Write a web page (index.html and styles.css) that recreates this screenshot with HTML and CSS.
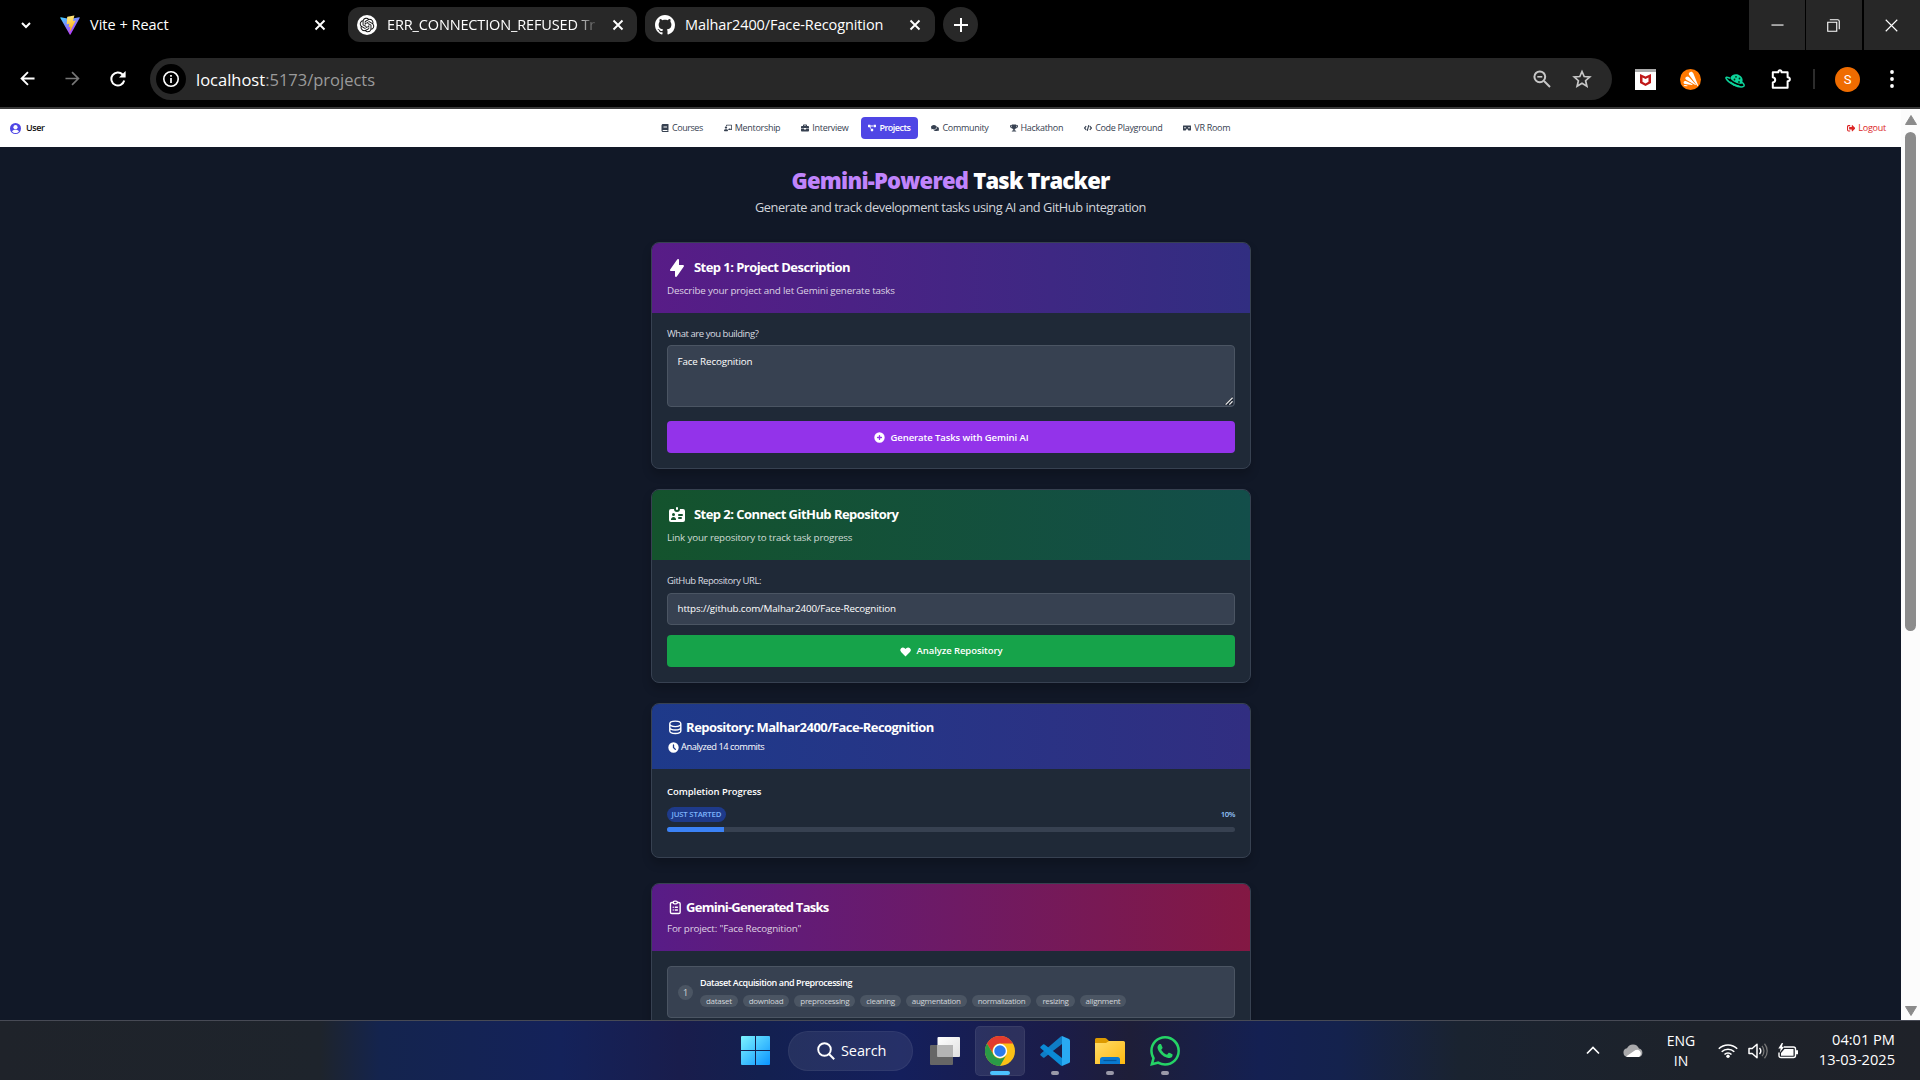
FILE: index.html
```html
<!DOCTYPE html>
<html lang="en">
<head>
<meta charset="utf-8">
<title>Vite + React</title>
<link rel="stylesheet" href="styles.css">
</head>
<body>
<div class="screen">
  <header class="tabstrip">
    <svg class="tab-search" viewBox="0 0 12 12"><path d="M2 4l4 4 4-4" fill="none" stroke="#fff" stroke-width="2"/></svg>
    <div class="tab tab-active">
      <svg class="favicon" viewBox="0 0 32 32">
        <defs>
          <linearGradient id="va" x1="0" y1="0" x2=".6" y2="1"><stop offset="0" stop-color="#41d1ff"/><stop offset="1" stop-color="#bd34fe"/></linearGradient>
          <linearGradient id="vb" x1=".4" y1="0" x2=".6" y2="1"><stop offset="0" stop-color="#ffea83"/><stop offset="1" stop-color="#ffa800"/></linearGradient>
        </defs>
        <path fill="url(#va)" d="M31.5 4.8L16.9 31a.8.8 0 01-1.4 0L.5 4.8a.8.8 0 01.8-1.2L16 6.3l14.7-2.7a.8.8 0 01.8 1.2z"/>
        <path fill="url(#vb)" d="M22.6 .6L11.8 2.7a.4.4 0 00-.3.4l-.7 11.2c0 .3.2.5.5.4l3-.7c.3 0 .5.2.5.5l-.9 4.4c-.1.3.2.5.5.4l1.8-.5c.3-.1.5.2.5.4l-1.4 7c-.1.4.5.6.7.3l8.800-17c.1-.3-.1-.6-.4-.6l-3.100.6c-.3.1-.5-.2-.4-.5l2-7.900c.1-.3-.1-.6-.4-.5z"/>
      </svg>
      <span class="tab-title vite">Vite + React</span>
      <svg class="close" viewBox="0 0 12 12"><path d="M1.500 1.500l9 9M10.500 1.500l-9 9"/></svg>
    </div>
    <div class="tab tab-chat">
      <svg class="favicon" viewBox="0 0 40 40"><circle cx="20" cy="20" r="20" fill="#fff"/><path transform="translate(5.500 5.500) scale(1.210)" fill="#111" d="M22.2819 9.8211a5.9847 5.9847 0 0 0-.5157-4.9108 6.0462 6.0462 0 0 0-6.5098-2.9A6.0651 6.0651 0 0 0 4.9807 4.1818a5.9847 5.9847 0 0 0-3.9977 2.9 6.0462 6.0462 0 0 0 .7427 7.0966 5.98 5.98 0 0 0 .511 4.9107 6.051 6.051 0 0 0 6.5146 2.9001A5.9847 5.9847 0 0 0 13.2599 24a6.0557 6.0557 0 0 0 5.7718-4.2058 5.9894 5.9894 0 0 0 3.9977-2.9001 6.0557 6.0557 0 0 0-.7475-7.0729zm-9.022 12.6081a4.4755 4.4755 0 0 1-2.8764-1.0408l.1419-.0804 4.7783-2.7582a.7948.7948 0 0 0 .3927-.6813v-6.7369l2.02 1.1686a.071.071 0 0 1 .038.052v5.5826a4.504 4.504 0 0 1-4.4945 4.4944zm-9.6607-4.1254a4.4708 4.4708 0 0 1-.5346-3.0137l.142.0852 4.783 2.7582a.7712.7712 0 0 0 .7806 0l5.8428-3.3685v2.3324a.0804.0804 0 0 1-.0332.0615L9.74 19.9502a4.4992 4.4992 0 0 1-6.1408-1.6464zM2.3408 7.8956a4.485 4.485 0 0 1 2.3655-1.9728V11.6a.7664.7664 0 0 0 .3879.6765l5.8144 3.3543-2.0201 1.1685a.0757.0757 0 0 1-.071 0l-4.8303-2.7865A4.504 4.504 0 0 1 2.3408 7.872zm16.5963 3.8558L13.1038 8.364 15.1192 7.2a.0757.0757 0 0 1 .071 0l4.8303 2.7913a4.4944 4.4944 0 0 1-.6765 8.1042v-5.6772a.79.79 0 0 0-.407-.667zm2.0107-3.0231l-.142-.0852-4.7735-2.7818a.7759.7759 0 0 0-.7854 0L9.409 9.2297V6.8974a.0662.0662 0 0 1 .0284-.0615l4.8303-2.7866a4.4992 4.4992 0 0 1 6.6802 4.66zM8.3065 12.863l-2.02-1.1638a.0804.0804 0 0 1-.038-.0567V6.0742a4.4992 4.4992 0 0 1 7.3757-3.4537l-.142.0805L8.704 5.459a.7948.7948 0 0 0-.3927.6813zm1.0976-2.3654l2.602-1.4998 2.6069 1.4998v2.9994l-2.5974 1.4997-2.6067-1.4997Z"/></svg>
      <span class="tab-title fade">ERR_CONNECTION_REFUSED Tr</span>
      <svg class="close" viewBox="0 0 12 12"><path d="M1.500 1.500l9 9M10.500 1.500l-9 9"/></svg>
    </div>
    <div class="tab tab-git">
      <svg class="favicon" viewBox="0 0 16 16"><path fill="#fff" d="M8 0C3.580 0 0 3.580 0 8c0 3.540 2.290 6.530 5.470 7.590.4.070.550-.170.550-.380 0-.190-.010-.820-.010-1.490-2.010.370-2.530-.490-2.690-.940-.090-.230-.480-.940-.820-1.130-.280-.150-.680-.520-.010-.530.630-.010 1.080.580 1.230.820.720 1.210 1.870.870 2.330.660.070-.520.280-.870.510-1.070-1.780-.2-3.640-.890-3.640-3.950 0-.870.310-1.590.820-2.150-.080-.2-.360-1.020.080-2.120 0 0 .670-.210 2.200.820.640-.180 1.320-.270 2-.270s1.360.090 2 .270c1.530-1.040 2.200-.820 2.200-.820.440 1.100.160 1.920.080 2.120.510.560.820 1.270.820 2.150 0 3.070-1.870 3.750-3.650 3.950.290.250.540.730.540 1.480 0 1.070-.010 1.930-.010 2.200 0 .210.150.460.550.380A8.010 8.010 0 0016 8c0-4.420-3.580-8-8-8z"/></svg>
      <span class="tab-title git">Malhar2400/Face-Recognition</span>
      <svg class="close" viewBox="0 0 12 12"><path d="M1.500 1.500l9 9M10.500 1.500l-9 9"/></svg>
    </div>
    <div class="new-tab"><svg viewBox="0 0 14 14"><path d="M7 0v14M0 7h14" stroke="#fff" stroke-width="2"/></svg></div>
    <div class="window-controls">
      <div class="wc wc-min"><svg viewBox="0 0 14 14"><path d="M.5 6.500h13"/></svg></div>
      <div class="wc"><svg viewBox="0 0 14 14"><path d="M.8 3.500h9.700v9.700H.8zM3 .8h8.500q1.700 0 1.700 1.700V11"/></svg></div>
      <div class="wc wc-close"><svg viewBox="0 0 14 14"><path d="M.8.8l12.400 12.400M13.200.8L.8 13.200"/></svg></div>
    </div>
  </header>

  <div class="toolbar">
    <svg class="tb-back" viewBox="0 0 16 16"><path d="M15.500 8H2M8.500 1.200L1.700 8l6.800 6.800" fill="none" stroke="#fff" stroke-width="2"/></svg>
    <svg class="tb-forward" viewBox="0 0 16 16"><path d="M.5 8H14M7.500 1.200L14.300 8l-6.800 6.800" fill="none" stroke="#777" stroke-width="1.800"/></svg>
    <svg class="tb-reload" viewBox="0 0 16 16"><path d="M14.200 9.500A6.500 6.500 0 1112.600 3.500L14 5" fill="none" stroke="#fff" stroke-width="2"/><path d="M15.600 0v6.600H9z" fill="#fff"/></svg>
    <div class="omnibox">
      <div class="site-info"><svg viewBox="0 0 16 16"><circle cx="8" cy="8" r="7.200" fill="none" stroke="#fff" stroke-width="1.600"/><path d="M8 7v5M8 4v1.800" stroke="#fff" stroke-width="1.700"/></svg></div>
      <span class="url"><b>localhost</b>:5173/projects</span>
      <svg class="ob-zoom" viewBox="0 0 18 18"><g fill="none" stroke="#c7c7c7" stroke-width="2"><circle cx="6.800" cy="6.800" r="5.400"/><path d="M11 11l6 6"/><path d="M4.300 6.800h5" stroke-width="1.600"/></g></svg>
      <svg class="ob-star" viewBox="0 0 20 20"><path d="M10 2.500l2.200 5 5.600.5-4.200 3.700 1.300 5.500L10 14.300l-4.900 2.900 1.300-5.500L2.200 8l5.600-.5z" fill="none" stroke="#c7c7c7" stroke-width="1.700"/></svg>
    </div>
    <div class="extensions">
      <svg viewBox="0 0 21 21"><path fill="#fff" d="M0 0h21v21H0z"/><path fill="#aaa" d="M0 0h21v3H0z"/><path fill="#c01818" d="M5 5l5.500 2.500L16 5v9l-5.500 3L5 14zM7.500 8.500v4.200l3 1.700 3-1.700V8.500l-3 1.500z" fill-rule="evenodd"/></svg>
      <svg viewBox="0 0 21 21"><circle cx="10.500" cy="10.500" r="10.500" fill="#ff7800"/><path fill="#fff" d="M9.500 3.500c1.500-1.300 3-.7 3.800.8l4.800 12c.2.700-.3.900-.8.4L9.200 6c-.7-.9-.5-1.800.3-2.500zM6 8c1-.9 2-.7 2.800 0l7 7.400c.4.5 0 .9-.5.6L6.200 10.700C5 10 5 8.900 6 8zM3.800 12.700c.5-.8 1.200-1 2-.6l6.400 3c.6.400.4.900-.2.800l-7-.8c-1.200-.2-1.700-1.300-1.200-2.400zM3.500 17c.3-.8 1-1 1.800-.9l2 .4c.5.200.4.700-.1.700z"/></svg>
      <svg viewBox="0 0 21 21"><path d="M5 9.200C1.500 7.600.2 8 1.300 9.800c2.500 4.200 11.500 9 16.500 8 2.300-.5 1.700-2.300-.7-4.600" fill="none" stroke="#0dd39b" stroke-width="1.500"/><path fill="#0dd39b" d="M5.300 9.300c1-4.300 7-5.600 10.600-2 2.300 2.300 2.200 5.300.6 7.600-4 0-9-2.300-11.200-5.600z"/><path fill="#0dd39b" d="M5.500 12c2.500 2.500 6 4.300 9.500 4.600-3.300 1.700-8.500.6-9.500-4.600z"/><g fill="#031"><circle cx="11" cy="7.800" r=".9"/><circle cx="14.500" cy="9.500" r=".9"/><circle cx="9.500" cy="10.500" r=".9"/><circle cx="14" cy="13" r=".9"/></g></svg>
      <svg class="puzzle" viewBox="0 0 21 21"><path d="M1.800 3.300h5.500c.3-2.600 3-2.600 3.300 0H16.600v5c3 .3 3 3.700 0 4v6.500H1.800v-5.300c3.200-.7 3.200-4.500 0-5.200z" fill="none" stroke="#fff" stroke-width="2" stroke-linejoin="round"/></svg>
      <i class="divider"></i>
      <span class="avatar">S</span>
      <svg class="menu" viewBox="0 0 4 18"><g fill="#fff"><circle cx="2" cy="2" r="1.900"/><circle cx="2" cy="9" r="1.900"/><circle cx="2" cy="16" r="1.900"/></g></svg>
    </div>
  </div>

  <div class="viewport">
    <main class="page">
      <nav class="nav">
        <div class="user"><svg viewBox="0 0 24 24"><circle cx="12" cy="12" r="12" fill="#4f46e5"/><circle cx="12" cy="9" r="4.600" fill="#fff"/><path d="M4.500 19c1-3.500 3.500-4.500 7.500-4.500s6.500 1 7.500 4.500c-4 4-11 4-15 0z" fill="#fff"/></svg><span>User</span></div>
        <ul class="links">
          <li class="tight"><svg viewBox="0 0 448 512"><path d="M448 360V24c0-13.300-10.700-24-24-24H96C43 0 0 43 0 96v320c0 53 43 96 96 96h328c13.300 0 24-10.700 24-24v-16c0-7.500-3.500-14.300-8.900-18.700-4.200-15.400-4.200-59.300 0-74.700 5.400-4.300 8.900-11.100 8.900-18.600zM128 134c0-3.300 2.700-6 6-6h212c3.300 0 6 2.700 6 6v20c0 3.300-2.700 6-6 6H134c-3.300 0-6-2.700-6-6v-20zm0 64c0-3.300 2.700-6 6-6h212c3.300 0 6 2.700 6 6v20c0 3.300-2.700 6-6 6H134c-3.300 0-6-2.700-6-6v-20zm253.400 250H96c-17.700 0-32-14.300-32-32 0-17.600 14.400-32 32-32h285.400c-1.900 17.100-1.900 46.900 0 64z"/></svg><span>Courses</span></li>
          <li><svg viewBox="0 0 640 512"><path d="M208 352c-2.400 0-4.800.4-7.100 1.100C188.100 357.300 174.400 360 160 360s-28.100-2.700-40.900-6.900C116.800 352.400 114.400 352 112 352 49.900 352-.5 402.600 0 464.600.2 490.900 21.700 512 48 512h224c26.300 0 47.800-21.100 48-47.400.5-62-49.900-112.600-112-112.600zm-48-32c53 0 96-43 96-96s-43-96-96-96-96 43-96 96 43 96 96 96zM592 0H208c-26.500 0-48 22.300-48 49.600V96c23.400 0 45.100 6.800 64 17.800V64h352v288h-64v-64H384v64h-76.200c19.100 16.700 33.100 38.700 39.400 64H592c26.500 0 48-22.300 48-49.600V49.600C640 22.300 618.500 0 592 0z"/></svg><span>Mentorship</span></li>
          <li><svg viewBox="0 0 512 512"><path d="M320 336c0 8.800-7.200 16-16 16h-96c-8.800 0-16-7.200-16-16v-48H0v144c0 25.600 22.400 48 48 48h416c25.600 0 48-22.400 48-48V288H320v48zm144-208h-80V80c0-25.600-22.400-48-48-48H176c-25.600 0-48 22.400-48 48v48H48c-25.600 0-48 22.400-48 48v80h512v-80c0-25.600-22.400-48-48-48zm-144 0H192V96h128v32z"/></svg><span>Interview</span></li>
          <li class="on"><svg viewBox="0 0 640 512"><path d="M384 320H256c-17.700 0-32 14.300-32 32v128c0 17.700 14.300 32 32 32h128c17.700 0 32-14.300 32-32V352c0-17.700-14.300-32-32-32zM192 32c0-17.700-14.300-32-32-32H32C14.300 0 0 14.300 0 32v128c0 17.700 14.300 32 32 32h95.700l73.200 128c11.200-19 31.500-32 55.100-32h.3L192 175.500V128h224V64H192V32zM608 0H480c-17.700 0-32 14.300-32 32v128c0 17.700 14.300 32 32 32h128c17.700 0 32-14.300 32-32V32c0-17.700-14.300-32-32-32z"/></svg><span>Projects</span></li>
          <li><svg viewBox="0 0 576 512"><path d="M416 192c0-88.400-93.100-160-208-160S0 103.600 0 192c0 34.300 14.100 65.900 38 92-13.400 30.200-35.500 54.200-35.800 54.500-2.200 2.300-2.800 5.700-1.500 8.700S4.800 352 8 352c36.600 0 66.900-12.300 88.700-25 32.200 15.700 70.300 25 111.300 25 114.900 0 208-71.600 208-160zm122 220c23.900-26 38-57.700 38-92 0-66.900-53.500-124.200-129.300-148.100.9 6.600 1.300 13.300 1.300 20.100 0 105.900-107.700 192-240 192-10.800 0-21.300-.8-31.700-1.900C207.800 439.600 281.800 480 368 480c41 0 79.100-9.200 111.300-25 21.800 12.700 52.100 25 88.700 25 3.200 0 6.100-1.900 7.300-4.800 1.300-2.900.7-6.300-1.500-8.700-.3-.3-22.400-24.200-35.800-54.500z"/></svg><span>Community</span></li>
          <li><svg viewBox="0 0 576 512"><path d="M552 64H448V24c0-13.300-10.700-24-24-24H152c-13.300 0-24 10.700-24 24v40H24C10.700 64 0 74.700 0 88v56c0 35.700 22.500 72.400 61.900 100.700 31.500 22.700 69.800 37.100 110 41.700C203.300 338.500 240 360 240 360v72h-48c-35.300 0-64 20.700-64 56v12c0 6.600 5.400 12 12 12h296c6.600 0 12-5.400 12-12v-12c0-35.300-28.700-56-64-56h-48v-72s36.700-21.500 68.100-73.600c40.300-4.600 78.600-19 110-41.700 39.300-28.300 61.900-65 61.900-100.700V88c0-13.300-10.700-24-24-24zM99.300 192.800C74.900 175.200 64 155.600 64 144v-16h64.200c1 32.600 5.800 61.200 12.800 86.200-15.100-5.200-29.200-12.400-41.700-21.400zM512 144c0 16.100-17.700 36.100-35.300 48.800-12.500 9-26.700 16.200-41.800 21.400 7-25 11.800-53.600 12.800-86.200H512v16z"/></svg><span>Hackathon</span></li>
          <li><svg viewBox="0 0 640 512"><path d="M175 110L45 256l130 146M465 110l130 146-130 146M385 30L255 482" fill="none" stroke="currentColor" stroke-width="92"/></svg><span>Code Playground</span></li>
          <li><svg viewBox="0 0 640 512"><path fill-rule="evenodd" d="M608 64H32C14.300 64 0 78.300 0 96v320c0 17.700 14.300 32 32 32h160.200c25.200 0 48-14.900 58.200-37.900l35.300-78.300c13-28.900 55.600-28.900 68.600 0l35.300 78.300c10.200 23 33 37.900 58.200 37.900H608c17.700 0 32-14.300 32-32V96c0-17.700-14.300-32-32-32zM160 304c-35.300 0-64-28.700-64-64s28.700-64 64-64 64 28.700 64 64-28.700 64-64 64zm320 0c-35.300 0-64-28.700-64-64s28.700-64 64-64 64 28.700 64 64-28.700 64-64 64z"/></svg><span>VR Room</span></li>
        </ul>
        <div class="logout"><svg viewBox="0 0 512 512"><path d="M497 273L329 441c-15 15-41 4.500-41-17v-96H152c-13.300 0-24-10.700-24-24v-96c0-13.300 10.700-24 24-24h136V88c0-21.400 25.900-32 41-17l168 168c9.300 9.400 9.300 24.600 0 34zM192 436v-40c0-6.600-5.400-12-12-12H96c-17.700 0-32-14.300-32-32V160c0-17.700 14.300-32 32-32h84c6.600 0 12-5.400 12-12V76c0-6.600-5.400-12-12-12H96c-53 0-96 43-96 96v192c0 53 43 96 96 96h84c6.600 0 12-5.400 12-12z"/></svg><span>Logout</span></div>
      </nav>

      <div class="hero">
        <h1><em>Gemini-Powered</em> Task Tracker</h1>
        <p>Generate and track development tasks using AI and GitHub integration</p>
      </div>

      <section class="card">
        <div class="head head-purple">
          <h2><svg class="ic20" viewBox="0 0 20 20"><path d="M11.300 1.046A1 1 0 0112 2v5h4a1 1 0 01.820 1.573l-7 10A1 1 0 018 18v-5H4a1 1 0 01-.820-1.573l7-10a1 1 0 011.120-.380z"/></svg><span>Step 1: Project Description</span></h2>
          <p>Describe your project and let Gemini generate tasks</p>
        </div>
        <div class="body">
          <label>What are you building?</label>
          <div class="area"><span>Face Recognition</span>
            <svg class="grip" viewBox="0 0 11 11"><path d="M0 11L11 0v11z" fill="#1b2330"/><path d="M2 10.500l8.500-8.500M6.500 10.500l4-4" stroke="#e5e5e5" stroke-width="1.600"/></svg>
          </div>
          <button class="btn btn-purple"><svg viewBox="0 0 20 20"><path fill-rule="evenodd" d="M10 18a8 8 0 100-16 8 8 0 000 16zm1-11a1 1 0 10-2 0v2H7a1 1 0 100 2h2v2a1 1 0 102 0v-2h2a1 1 0 100-2h-2V7z"/></svg><span>Generate Tasks with Gemini AI</span></button>
        </div>
      </section>

      <section class="card">
        <div class="head head-green">
          <h2><svg class="ic20" viewBox="0 0 20 20"><path fill-rule="evenodd" d="M10 2a1 1 0 00-1 1v1a1 1 0 002 0V3a1 1 0 00-1-1zM4 4h3a3 3 0 006 0h3a2 2 0 012 2v9a2 2 0 01-2 2H4a2 2 0 01-2-2V6a2 2 0 012-2zm2.500 7a1.500 1.500 0 100-3 1.500 1.500 0 000 3zm2.450 4a2.500 2.500 0 10-4.900 0h4.900zM12 9a1 1 0 100 2h3a1 1 0 100-2h-3zm-1 4a1 1 0 011-1h2a1 1 0 110 2h-2a1 1 0 01-1-1z"/></svg><span>Step 2: Connect GitHub Repository</span></h2>
          <p>Link your repository to track task progress</p>
        </div>
        <div class="body">
          <label>GitHub Repository URL:</label>
          <div class="input"><span>https://github.com/Malhar2400/Face-Recognition</span></div>
          <button class="btn btn-green"><svg viewBox="0 0 20 20"><path d="M3.172 5.172a4 4 0 015.656 0L10 6.343l1.172-1.171a4 4 0 115.656 5.656L10 17.657l-6.828-6.829a4 4 0 010-5.656z"/></svg><span>Analyze Repository</span></button>
        </div>
      </section>

      <section class="card">
        <div class="head head-blue">
          <h3><svg class="ic17" viewBox="0 0 24 24"><path d="M4 7v10c0 2.210 3.582 4 8 4s8-1.790 8-4V7M4 7c0 2.210 3.582 4 8 4s8-1.790 8-4M4 7c0-2.210 3.582-4 8-4s8 1.790 8 4m0 5c0 2.210-3.582 4-8 4s-8-1.790-8-4"/></svg><span>Repository: Malhar2400/Face-Recognition</span></h3>
          <p class="commits"><svg viewBox="0 0 20 20"><path fill-rule="evenodd" d="M10 18a8 8 0 100-16 8 8 0 000 16zm1-12a1 1 0 10-2 0v4a1 1 0 00.293.707l2.828 2.829a1 1 0 101.415-1.415L11 9.586V6z"/></svg><span>Analyzed 14 commits</span></p>
        </div>
        <div class="body body-progress">
          <h4>Completion Progress</h4>
          <div class="status"><span class="badge">JUST STARTED</span><span class="percent">10%</span></div>
          <div class="bar"><i style="width:10%"></i></div>
        </div>
      </section>

      <section class="card card-tasks">
        <div class="head head-pink">
          <h3><svg class="ic17" viewBox="0 0 24 24"><path d="M9 5H7a2 2 0 00-2 2v12a2 2 0 002 2h10a2 2 0 002-2V7a2 2 0 00-2-2h-2M9 5a2 2 0 002 2h2a2 2 0 002-2M9 5a2 2 0 012-2h2a2 2 0 012 2m-3 7h3m-3 4h3m-6-4h.010M9 16h.010"/></svg><span>Gemini-Generated Tasks</span></h3>
          <p>For project: "Face Recognition"</p>
        </div>
        <div class="body body-tasks">
          <div class="task">
            <span class="num">1</span>
            <div class="task-text">
              <h5>Dataset Acquisition and Preprocessing</h5>
              <div class="tags"><span>dataset</span><span>download</span><span>preprocessing</span><span>cleaning</span><span>augmentation</span><span>normalization</span><span>resizing</span><span>alignment</span></div>
            </div>
          </div>
        </div>
      </section>
    </main>
    <aside class="scrollbar">
      <svg viewBox="0 0 12 10"><path d="M6 .5L11.500 9.500H.5z" fill="#8b8b8b" stroke="#8b8b8b" stroke-linejoin="round"/></svg>
      <i></i>
      <svg viewBox="0 0 12 10"><path d="M6 9.500L11.500.5H.5z" fill="#8b8b8b" stroke="#8b8b8b" stroke-linejoin="round"/></svg>
    </aside>
  </div>

  <footer class="taskbar">
    <svg class="start" viewBox="0 0 29 29"><defs><linearGradient id="win" gradientUnits="userSpaceOnUse" x1="0" y1="0" x2="29" y2="29"><stop offset="0" stop-color="#7df3ff"/><stop offset="1" stop-color="#0a94ff"/></linearGradient></defs><path fill="url(#win)" d="M0 1q0-1 1-1h13v14H0zM15 0h13q1 0 1 1v13H15zM0 15h14v14H1q-1 0-1-1zM15 15h14v13q0 1-1 1H15z"/></svg>
    <div class="search"><svg viewBox="0 0 18 18"><circle cx="7.500" cy="7.500" r="6.300" fill="none" stroke="#fff" stroke-width="1.900"/><path d="M12 12l5.200 5.200" stroke="#fff" stroke-width="2"/></svg><span>Search</span></div>
    <svg class="app app-view" viewBox="0 0 30 30"><defs><linearGradient id="tv" x1="0" y1="0" x2="1" y2="1"><stop offset="0" stop-color="#fff"/><stop offset="1" stop-color="#e0e0e0"/></linearGradient></defs><rect y="9" width="23" height="20" rx="1" fill="#666"/><rect x="7.500" y="1" width="22.500" height="20" rx="1" fill="url(#tv)"/><path d="M7.500 9H23v12H7.500z" fill="#b5b5b5"/></svg>
    <div class="tile tile-on">
      <svg class="app" viewBox="0 0 48 48"><circle cx="24" cy="24" r="24" fill="#fbc116"/><path d="M3.200 12A24 24 0 0144.800 12H24a12 12 0 00-10.400 18z" fill="#e33b2e"/><path d="M3.200 12A24 24 0 0024 48l10.400-18A12 12 0 0113.600 30z" fill="#2a9a47"/><circle cx="24" cy="24" r="11.500" fill="#fff"/><circle cx="24" cy="24" r="9.200" fill="#2b7bec"/></svg>
      <i></i>
    </div>
    <div class="tile">
      <svg class="app" viewBox="0 0 30 30"><path d="M22 0l7 3q1 .5 1 1.500v21q0 1-1 1.500l-7 3z" fill="#29aaf2"/><path d="M22 0v8L4.500 21.500q-.8.600-1.500 0L.7 19.600q-.9-.9 0-1.800L20.500.7z" fill="#0f7dc6"/><path d="M22 30v-8L4.500 8.500q-.8-.6-1.500 0L.7 10.400q-.9.9 0 1.800L20.500 29.300z" fill="#0a8ad6"/></svg>
      <i></i>
    </div>
    <div class="tile">
      <svg class="app" viewBox="0 0 30 30"><defs><linearGradient id="fo" x1="0" y1="0" x2="1" y2="1"><stop offset="0" stop-color="#ffdc69"/><stop offset="1" stop-color="#ffb90f"/></linearGradient></defs><path d="M0 3.500Q0 2 1.500 2H10q1 0 1.600.7L14 5v4H0z" fill="#dd9a00"/><path d="M0 7h11l3-2h14.500Q30 5 30 6.500V28H0z" fill="url(#fo)"/><path d="M5 28v-4.500Q5 21 7.500 21h15q2.500 0 2.500 2.500V28z" fill="#0a7ad0"/><path d="M8.500 24.500h13" stroke="#04569b" stroke-width="1.200"/></svg>
      <i></i>
    </div>
    <div class="tile">
      <svg class="app" viewBox="0 0 24 24"><path fill="#25d366" d="M17.472 14.382c-.297-.149-1.758-.867-2.030-.967-.273-.099-.471-.148-.670.150-.197.297-.767.966-.940 1.164-.173.199-.347.223-.644.075-.297-.150-1.255-.463-2.390-1.475-.883-.788-1.480-1.761-1.653-2.059-.173-.297-.018-.458.130-.606.134-.133.298-.347.446-.520.149-.174.198-.298.298-.497.099-.198.050-.371-.025-.520-.075-.149-.669-1.612-.916-2.207-.242-.579-.487-.5-.669-.510-.173-.008-.371-.010-.570-.010-.198 0-.520.074-.792.372-.272.297-1.040 1.016-1.040 2.479 0 1.462 1.065 2.875 1.213 3.074.149.198 2.096 3.200 5.077 4.487.709.306 1.262.489 1.694.625.712.227 1.360.195 1.871.118.571-.085 1.758-.719 2.006-1.413.248-.694.248-1.289.173-1.413-.074-.124-.272-.198-.570-.347m-5.421 7.403h-.004a9.870 9.870 0 01-5.031-1.378l-.361-.214-3.741.982.998-3.648-.235-.374a9.860 9.860 0 01-1.510-5.260c.001-5.450 4.436-9.884 9.888-9.884 2.640 0 5.122 1.030 6.988 2.898a9.825 9.825 0 012.893 6.994c-.003 5.450-4.437 9.884-9.885 9.884m8.413-18.297A11.815 11.815 0 0012.050 0C5.495 0 .160 5.335.157 11.892c0 2.096.547 4.142 1.588 5.945L.057 24l6.305-1.654a11.882 11.882 0 005.683 1.448h.005c6.554 0 11.890-5.335 11.893-11.893a11.821 11.821 0 00-3.480-8.413Z"/></svg>
      <i></i>
    </div>
    <div class="tray">
      <svg class="tr-up" viewBox="0 0 14 9"><path d="M1 7.500l6-6 6 6" fill="none" stroke="#fff" stroke-width="1.700"/></svg>
      <svg class="tr-cloud" viewBox="0 0 20 13"><path d="M4.500 13A4.400 4.400 0 014 4.300a6.500 6.500 0 0112 .3A4.300 4.300 0 0116 13z" fill="#a9a9ab"/><path d="M3 12.500L12.500 6l2.500-.2A4 4 0 0116 13H4.500z" fill="#fff"/></svg>
      <span class="lang">ENG<br>IN</span>
      <svg class="tr-wifi" viewBox="0 0 20 15"><g fill="none" stroke="#fff" stroke-width="1.600"><path d="M.8 5.800a13 13 0 0118.400 0M3.700 8.800a9 9 0 0112.600 0M6.500 11.500a5 5 0 017 0"/></g><circle cx="10" cy="13.200" r="1.700" fill="#fff"/></svg>
      <svg class="tr-vol" viewBox="0 0 20 16"><path d="M1 5.500h3.200L9 1.300v13.400l-4.800-4.200H1z" fill="none" stroke="#fff" stroke-width="1.500" stroke-linejoin="round"/><path d="M11.500 5a4.500 4.500 0 010 6" fill="none" stroke="#fff" stroke-width="1.400"/><path d="M14 2.800a8 8 0 010 10.400M16.500.8a11 11 0 010 14.400" fill="none" stroke="#777" stroke-width="1.300"/></svg>
      <svg class="tr-bat" viewBox="0 0 20 16"><path d="M6 4h9.500q2 0 2 2v6.500q0 2-2 2H3q-2 0-2-2V9.500" fill="none" stroke="#fff" stroke-width="1.400"/><path d="M6.500 6h9v6.800H3V10zM18 7.300h2v4h-2z" fill="#fff"/><path d="M3.800 0L.3 5.500h2.400L1.800 9.500l4.400-5.700H3.900L5 0z" fill="#fff"/></svg>
      <span class="clock">04:01 PM<br>13-03-2025</span>
    </div>
  </footer>
</div>
</body>
</html>
```

FILE: styles.css
```css
* { box-sizing: border-box; margin: 0; padding: 0; }
body { background: #000; font-family: "Open Sans", "Noto Sans", sans-serif; color: #fff; }
svg { display: block; flex: none; }
span, h1, p, label { white-space: nowrap; }
.screen { width: 1920px; height: 1080px; overflow: hidden; display: flex; flex-direction: column; }

/* browser tabs */
.tabstrip { height: 58px; display: flex; align-items: flex-start; flex: none; }
.tab-search { width: 12px; height: 12px; margin: 19px 0 0 20px; }
.tab { height: 35px; margin-top: 7px; border-radius: 12px; display: flex; align-items: center; background: #282828; padding: 0 13px 0 9px; }
.tab-active { background: none; width: 290px; margin-left: 19px; padding: 0 15px 0 9px; margin-right: 7px; }
.tab-chat { width: 289px; margin-right: 8px; }
.tab-git { width: 290px; margin-right: 8px; padding: 0 14px 0 10px; }
.favicon { width: 20px; height: 20px; margin-right: 10px; }
.tab-title { font-size: 14.500px; line-height: 20px; }
.tab-title.git { letter-spacing: -.1px; }
.fade { letter-spacing: -.140px; -webkit-mask-image: linear-gradient(90deg, #000 188px, transparent 212px); mask-image: linear-gradient(90deg, #000 188px, transparent 212px); }
.close { width: 12px; height: 12px; margin-left: auto; fill: none; stroke: #fff; stroke-width: 1.900; }
.new-tab { width: 35px; height: 35px; margin-top: 7px; border-radius: 50%; background: #282828; display: flex; align-items: center; justify-content: center; }
.new-tab svg { width: 14px; height: 14px; }
.window-controls { margin-left: auto; display: flex; gap: 1px; }
.wc { width: 56px; height: 50px; background: #272727; display: flex; align-items: center; justify-content: center; padding-right: 2px; }
.wc-min { padding-right: 0; }
.wc-close { margin-left: 1px; }
.wc svg { width: 13px; height: 13px; fill: none; stroke: #fff; stroke-width: 1.200; }

/* address row */
.toolbar { height: 51px; flex: none; border-bottom: 2px solid #383838; display: flex; align-items: flex-start; }
.toolbar > svg { width: 15px; height: 15px; margin-top: 13px; }
.toolbar > .tb-back { margin-left: 20px; }
.toolbar > .tb-forward { margin-left: 30px; }
.toolbar > .tb-reload { width: 16px; height: 16px; margin-left: 30px; }
.omnibox { width: 1462px; height: 42px; border-radius: 21px; background: #282828; margin-left: 24px; padding: 0 20px 0 6px; display: flex; align-items: center; }
.site-info { width: 30px; height: 30px; border-radius: 50%; background: #000; display: flex; align-items: center; justify-content: center; margin-right: 10px; }
.site-info svg { width: 16px; height: 16px; }
.url { font-size: 16.500px; color: #9b9b9b; line-height: 24px; padding-top: 1px; }
.url b { font-weight: 400; color: #fff; }
.ob-zoom { width: 18px; height: 18px; margin-left: auto; margin-right: 21px; }
.ob-star { width: 20px; height: 20px; }
.extensions { height: 42px; display: flex; align-items: center; margin-left: 23px; }
.extensions > svg { width: 21px; height: 21px; margin-right: 24px; }
.extensions > .puzzle { margin-left: 1px; }
.divider { width: 2px; height: 20px; background: #2c2c2c; margin-right: 20px; margin-left: -3px; }
.avatar { width: 25px; height: 25px; border-radius: 50%; background: #ef6c00; font-family: Roboto, sans-serif; font-size: 13px; line-height: 25px; text-align: center; }
.extensions > .menu { width: 4px; height: 18px; margin: 0 0 0 30px; }

/* page */
.viewport { height: 911px; flex: none; display: flex; overflow: hidden; }
.page { width: 1901px; background: #111827; flex: none; }
.nav { height: 38px; background: #fff; display: flex; align-items: center; font-size: 9px; line-height: 14px; color: #374151; letter-spacing: -.250px; }
.user { width: 653px; padding-left: 10px; display: flex; align-items: center; gap: 5px; color: #111; font-weight: 600; }
.user span { letter-spacing: -.400px; }
.user svg { width: 11px; height: 11px; }
.links { display: flex; gap: 5px; list-style: none; font-weight: 500; letter-spacing: -.300px; }
.links li { height: 22px; padding: 0 8px; border-radius: 4px; display: flex; align-items: center; gap: 3px; }
.links svg { height: 8px; width: 8px; fill: currentColor; }
.links .tight { letter-spacing: -.450px; }
.links .on { background: #4f46e5; color: #fff; font-weight: 600; letter-spacing: -.5px; padding: 0 8px 0 7px; }
.logout { margin-left: auto; margin-right: 15px; display: flex; align-items: center; gap: 3px; color: #dc2626; }
.logout svg { width: 8.500px; height: 8.500px; fill: currentColor; }

.hero { text-align: center; padding-top: 18px; height: 95px; }
.hero h1 { font-size: 22px; line-height: 30px; font-weight: 800; letter-spacing: -.770px; }
.hero em { font-style: normal; color: #c084fc; }
.hero p { font-size: 12.800px; line-height: 20px; margin-top: 2px; color: #d1d5db; letter-spacing: -.450px; }

.card { width: 600px; margin: 0 auto 20px 651px; background: #1f2937; border: 1px solid #374151; border-radius: 8px; overflow: hidden; box-shadow: 0 6px 10px rgba(0,0,0,.2); }
.card-tasks { margin-top: 25px; }
.head { padding: 15px 15px 0; height: 70px; }
.head-purple { background: linear-gradient(90deg, #581c87, #312e81); }
.head-green { background: linear-gradient(90deg, #14532d, #134e4a); }
.head-blue { background: linear-gradient(90deg, #1e3a8a, #312e81); padding-top: 14px; height: 65px; }
.head-pink { background: linear-gradient(90deg, #581c87, #831843); padding-top: 14px; height: 67px; }
h2, h3 { display: flex; align-items: center; font-size: 13px; font-weight: 700; letter-spacing: -.550px; }
h2 { height: 20px; line-height: 18px; gap: 7px; }
h3 { height: 18px; line-height: 18px; gap: 3px; }
h2 span { padding-bottom: 3px; }
.head-pink h3 { letter-spacing: -.750px; }
.ic20 { width: 20px; height: 20px; fill: #fff; }
.ic17 { width: 16.600px; height: 16.600px; margin-left: -.5px; fill: none; stroke: #fff; stroke-width: 2; stroke-linecap: round; stroke-linejoin: round; }
.head > p { font-size: 9.800px; line-height: 14px; margin-top: 6px; color: rgba(255,255,255,.8); letter-spacing: -.170px; }
.head > .commits { color: #fff; font-size: 9.300px; letter-spacing: -.450px; display: flex; align-items: center; gap: 1px; margin-top: 4px; height: 14px; }
.commits svg { width: 13px; height: 13px; fill: #fff; }
.body { padding: 14px 15px 15px; }
.body label { display: block; font-size: 9.500px; line-height: 14px; color: #d9dce1; font-weight: 500; letter-spacing: -.450px; }
.area, .input { background: #374151; border: 1px solid #4b5563; border-radius: 4px; font-size: 9.800px; line-height: 14px; letter-spacing: -.130px; }
.area { position: relative; height: 62px; margin-top: 4px; padding: 9px 9.500px; }
.area span, .input span { display: block; }
.grip { position: absolute; right: 1px; bottom: 1px; width: 9px; height: 9px; }
.input { height: 32px; margin-top: 5px; padding: 8px 9.500px; }
.btn { width: 100%; height: 32px; margin-top: 14px; border: 0; border-radius: 4px; color: #fff; font: 600 9.500px/14px "Open Sans", "Noto Sans", sans-serif; letter-spacing: -.080px; display: flex; align-items: center; justify-content: center; gap: 5px; padding-right: 1px; }
.btn svg { width: 13px; height: 13px; fill: #fff; }
.btn-purple { background: #9333ea; }
.btn-purple span { padding-top: 1px; }
.btn-green { background: #16a34a; margin-top: 10px; }
.body-progress { padding: 16px 15px 25px; }
h4 { font-size: 9.500px; line-height: 14px; font-weight: 600; letter-spacing: -.060px; }
.status { display: flex; justify-content: space-between; align-items: center; margin-top: 8px; height: 15px; font-size: 7.800px; line-height: 15px; font-weight: 600; color: #93c5fd; letter-spacing: -.200px; }
.badge { background: #1e3a8a; border-radius: 8px; padding: 0 5px 0 4.500px; color: #7db4fb; }
.percent { letter-spacing: -.500px; }
.bar { height: 5px; margin-top: 5px; border-radius: 3px; background: #374151; overflow: hidden; }
.bar i { display: block; height: 5px; background: #3b82f6; }
.body-tasks { padding: 15px 15px 40px; }
.task { height: 52px; border: 1px solid #4b5563; border-radius: 4px; background: #374151; display: flex; align-items: center; padding-left: 10px; gap: 7px; }
.task-text { padding-bottom: 2px; }
.num { width: 15px; height: 15px; border-radius: 50%; background: #4b5563; color: #d1d5db; font-size: 9px; line-height: 15px; text-align: center; }
h5 { font-size: 9px; line-height: 14px; font-weight: 600; letter-spacing: -.400px; }
.tags { display: flex; gap: 5px; margin-top: 5px; }
.tags span { height: 12px; padding: 0 6px; border-radius: 6px; background: #4b5563; color: #d1d5db; font-size: 8px; line-height: 11.500px; letter-spacing: -.300px; }

.scrollbar { width: 19px; background: #fcfcfc; display: flex; flex-direction: column; align-items: center; padding: 6px 0 4px; }
.scrollbar svg { width: 12px; height: 10px; }
.scrollbar i { width: 11px; height: 499px; margin: 7px 0 auto; border-radius: 6px; background: #8b8b8b; }

/* desktop taskbar */
.taskbar { height: 60px; flex: none; border-top: 1px solid #474a55; display: flex; align-items: center; background: linear-gradient(90deg, #1f232a 0, #1e242c 320px, #14244e 380px, #14225a 560px, #191d4c 680px, #132050 760px, #141f5c 900px, #1b1c48 1060px, #1e1e38 1130px, #142052 1260px, #14224d 1340px, #1a2330 1460px, #1d222a 1700px, #1f2229 1920px); }
.start { width: 29px; height: 29px; margin-left: 741px; }
.search { width: 125px; height: 40px; border-radius: 20px; margin-left: 18px; background: rgba(255,255,255,.08); border: 1px solid rgba(255,255,255,.05); display: flex; align-items: center; padding-left: 28px; gap: 6px; font-size: 14.500px; letter-spacing: -.100px; }
.search svg { width: 18px; height: 18px; }
.app { width: 30px; height: 30px; }
.app-view { margin: 0 15px 0 17px; }
.tile { width: 50px; height: 50px; margin-right: 5px; border-radius: 5px; display: flex; flex-direction: column; align-items: center; padding-top: 10px; }
.tile-on { background: rgba(255,255,255,.09); box-shadow: inset 0 0 0 1px rgba(255,255,255,.06); }
.tile i { width: 8px; height: 4px; border-radius: 2px; background: #9a99a8; margin-top: 5px; }
.tile-on i { width: 20px; background: #4cc2ff; }
.tray { margin-left: auto; display: flex; align-items: center; padding-right: 25px; font-size: 14px; line-height: 20px; }
.tr-up { width: 14px; height: 9px; margin-right: 23px; }
.tr-cloud { width: 20px; height: 13px; margin-right: 23px; }
.lang { width: 30px; text-align: center; margin-right: 22px; }
.tr-wifi { width: 20px; height: 15px; margin-right: 10px; }
.tr-vol { width: 20px; height: 16px; margin-right: 10px; }
.tr-bat { width: 20px; height: 16px; margin-right: 19px; }
.clock { width: 78px; text-align: right; font-size: 14.600px; padding-bottom: 3px; }
```
